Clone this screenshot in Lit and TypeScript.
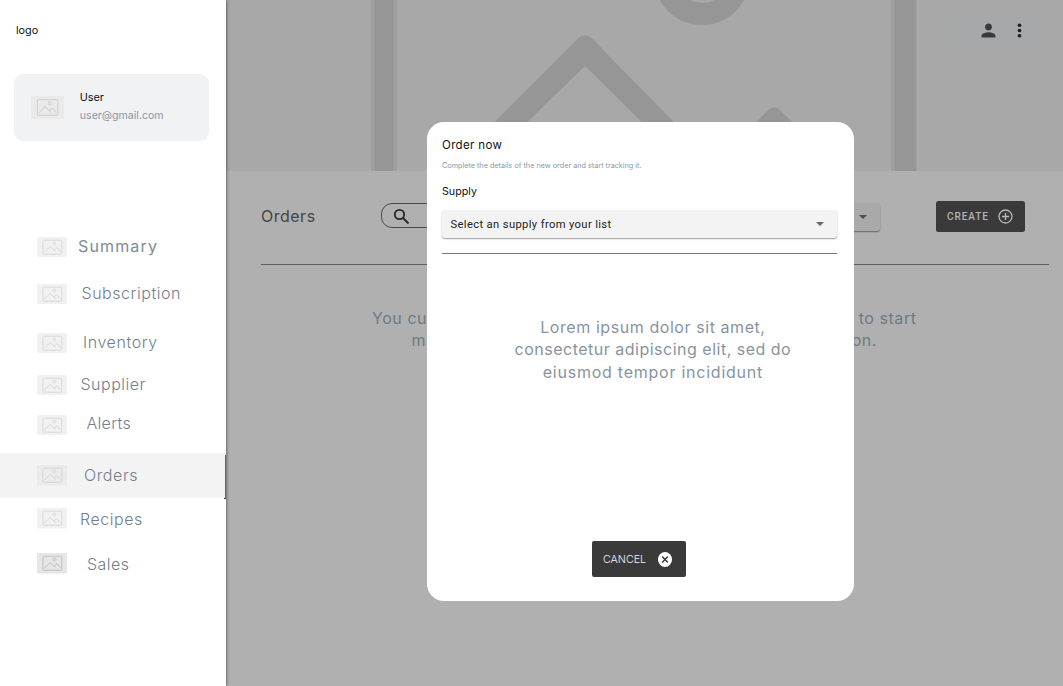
import { LitElement, html, css } from "lit";
import { customElement } from "lit/decorators.js";

interface NavItem {
  label: string;
  top: number; // space above the row
  indent: number; // space between the thumbnail and the label
  tracking: number;
  lift: number; // extra space under the label, raising it in the row
  kind?: string;
}

const NAV: NavItem[] = [
  { label: "Summary", top: 0, indent: 11, tracking: 1.15, lift: 3, kind: "strong" },
  { label: "Subscription", top: 17, indent: 14.5, tracking: 0.54, lift: 3 },
  { label: "Inventory", top: 19, indent: 16, tracking: 0.56, lift: 3 },
  { label: "Supplier", top: 12, indent: 13.5, tracking: 0.5, lift: 3 },
  { label: "Alerts", top: 10, indent: 19.5, tracking: 0.3, lift: 5 },
  { label: "Orders", top: 13, indent: 17, tracking: 0.6, lift: 2, kind: "active" },
  { label: "Recipes", top: 5.5, indent: 13, tracking: 0.54, lift: 0 },
  { label: "Sales", top: 15, indent: 20, tracking: 0.45, lift: 0, kind: "dark" },
];

@customElement("image-thumb")
export class ImageThumb extends LitElement {
  static styles = css`
    :host { display: block; flex: none; }
    svg { display: block; width: 100%; height: 100%; }
  `;
  render() {
    return html`<svg viewBox="0 0 31 21" preserveAspectRatio="none">
      <rect width="31" height="21" rx="0.8" fill="var(--thumb-bg, #f1f1f1)" />
      <g fill="none" stroke="var(--thumb-line, #d8d8d8)" stroke-width="1">
        <rect x="6" y="3.3" width="19.2" height="14.4" rx="1.2" />
        <circle cx="17.6" cy="6.7" r="1.4" />
        <path d="M7.3 15.8 13.3 9.7 19 15.2M17.3 13.4 20.2 11 24 15.2" />
      </g>
    </svg>`;
  }
}

@customElement("side-nav")
export class SideNav extends LitElement {
  static styles = css`
    :host {
      display: flex; flex-direction: column; box-sizing: border-box;
      width: 226px; height: 100%; background: #fff;
      font-family: Inter, sans-serif; color: #111;
    }
    .logo { padding: 23px 0 0 16px; font-size: 10.8px; line-height: 15px; }
    .user {
      display: flex; align-items: center; box-sizing: border-box;
      width: 195.5px; height: 66.5px; margin: 36px 0 0 13.8px; padding-left: 17px;
      border-radius: 9px; background: #f0f2f4;
    }
    .user image-thumb {
      width: 33px; height: 23px; margin-right: 16px;
      --thumb-bg: #eaeaea; --thumb-line: #d2d2d2;
    }
    .who { font-size: 10.8px; line-height: 18px; margin-top: -1px; }
    .mail { font-size: 10.6px; color: #8797a4; }
    nav { margin-top: 91.5px; }
    .item { display: flex; align-items: center; height: 30px; padding-left: 36.5px; }
    .item image-thumb { width: 30.5px; height: 20.5px; }
    .label { font-size: 16px; line-height: 20px; font-weight: 300; color: #72808e; }
    .strong .label { font-weight: 400; color: #7d8a97; }
    .active {
      height: 45px; background: #f3f3f3; position: relative;
      --thumb-bg: #ebebeb; --thumb-line: #d6d6d6;
    }
    .active::after {
      content: ""; position: absolute; right: 0; top: 2px; bottom: -1px;
      width: 2px; box-sizing: border-box; border-right: 1px solid #666; border-bottom: 1px solid #333;
    }
    .dark { --thumb-bg: #e6e6e6; --thumb-line: #c0c0c0; }
  `;
  render() {
    return html`
      <div class="logo">logo</div>
      <div class="user">
        <image-thumb></image-thumb>
        <div class="who"><div>User</div><div class="mail">user@gmail.com</div></div>
      </div>
      <nav>
        ${NAV.map(
          (n) => html`<div class="item ${n.kind ?? ""}" style="margin-top:${n.top}px">
            <image-thumb></image-thumb>
            <span class="label" style="margin-left:${n.indent}px;letter-spacing:${n.tracking}px;padding-bottom:${n.lift}px">${n.label}</span>
          </div>`
        )}
      </nav>
    `;
  }
}

@customElement("orders-page")
export class OrdersPage extends LitElement {
  static styles = css`
    :host {
      display: flex; flex-direction: column; height: 100%; flex: 1;
      background: #b0b0b0; font-family: Inter, sans-serif;
      border-right: 1px solid #ececec; box-sizing: border-box;
    }
    .hero { display: grid; height: 170.5px; background: #a8a8a8; overflow: hidden; flex: none; }
    .hero > * { grid-area: 1 / 1; }
    .hero svg { display: block; }
    .pill {
      justify-self: end; display: flex; align-items: center; box-sizing: border-box;
      width: 98px; height: 36px; margin: 14px 16px 0 0; padding: 0 0 3px 28.5px;
      border-radius: 18px; background: #a6a8aa; gap: 10px;
    }
    .bar { display: flex; align-items: center; height: 32px; margin: 29.5px 38px 0 35px; }
    h1 { margin: 0; width: 119.5px; flex: none; font-size: 16px; line-height: 20px; font-weight: 400; letter-spacing: 0.5px; color: #444; }
    .search {
      box-sizing: border-box; width: 220px; height: 25px; border: 1px solid #4a4a4a;
      border-radius: 11px; padding: 3.5px 0 0 11px; margin-top: -1px; flex: none;
    }
    .search svg, .pill svg, .create svg { display: block; }
    .filter {
      display: flex; align-items: center; justify-content: flex-end; box-sizing: border-box; flex: none;
      width: 200px; height: 28px; margin: 1px 0 0 79.5px; padding-right: 13px;
      border-radius: 3px; background: #a9a9a9; box-shadow: 0 1px 1.5px rgba(0, 0, 0, .42);
    }
    .create {
      display: flex; align-items: center; box-sizing: border-box; flex: none;
      width: 89.5px; height: 31px; margin: 0 0 0 55.5px; padding-left: 11.5px;
      border-radius: 2.5px; background: #3a3a3a; color: #b3b3b3;
      font: 500 10px Roboto, sans-serif; letter-spacing: 0.95px; gap: 8.5px;
    }
    .rule { height: 1px; margin: 32px 14.5px 0 35px; background: #606060; flex: none; }
    .empty { margin: 41.5px 0 0 146px; width: 544.5px; font-size: 16px; line-height: 22.5px; font-weight: 400; color: #6e7a85; letter-spacing: 0.55px; }
    .line { display: flex; justify-content: space-between; }
    .line.short { margin: 0 39.5px; }
  `;
  render() {
    return html`
      <div class="hero">
        <svg width="836" height="171" viewBox="226 0 836 171">
          <g fill="#9f9f9f">
            <rect x="371" width="26" height="171" />
            <rect x="891" width="26" height="171" />
          </g>
          <g fill="#969696">
            <rect x="374.5" width="19" height="171" />
            <rect x="894.5" width="21" height="171" />
            <path d="M447 170 579 37.5Q585 33.5 591 37.5L721 170H690L585 66 478 170Z" />
            <path d="M710 170 768.5 109.5Q774 105 779.5 109.5L840 170Z" />
          </g>
          <circle cx="702" cy="-23" r="37" fill="none" stroke="#969696" stroke-width="22" />
        </svg>
        <div class="pill">
          <svg width="21" height="21" viewBox="0 0 24 24" fill="#3a3a3a">
            <path d="M12 12c2.21 0 4-1.79 4-4s-1.79-4-4-4-4 1.79-4 4 1.79 4 4 4zm0 2c-2.67 0-8 1.34-8 4v2h16v-2c0-2.66-5.33-4-8-4z" />
          </svg>
          <svg width="21" height="21" viewBox="0 0 24 24" fill="#222">
            <circle cx="12" cy="6" r="2.1" /><circle cx="12" cy="12" r="2.1" /><circle cx="12" cy="18" r="2.1" />
          </svg>
        </div>
      </div>
      <div class="bar">
        <h1>Orders</h1>
        <div class="search">
          <svg width="17" height="17" viewBox="0 0 17 17" fill="none" stroke="#262626" stroke-width="1.8">
            <circle cx="6.5" cy="6.5" r="4.7" /><path d="M10 10 15.5 15.5" />
          </svg>
        </div>
        <div class="filter">
          <svg width="8" height="4" viewBox="0 0 8 4" fill="#4d4d4d"><path d="M0 0h8L4 4z" /></svg>
        </div>
        <div class="create">
          <span>CREATE</span>
          <svg width="17" height="17" viewBox="0 0 17 17" fill="none" stroke="#b8b8b8" stroke-width="1.3">
            <circle cx="8.5" cy="8.5" r="6.5" /><path d="M8.5 5v7M5 8.5h7" />
          </svg>
        </div>
      </div>
      <div class="rule"></div>
      <div class="empty">
        <div class="line"><span>You cu</span><span>to start</span></div>
        <div class="line short"><span>m</span><span>on.</span></div>
      </div>
    `;
  }
}

@customElement("order-dialog")
export class OrderDialog extends LitElement {
  static styles = css`
    :host {
      display: flex; flex-direction: column; box-sizing: border-box;
      width: 427px; height: 478.5px; padding: 15px 17.5px 0 14.7px;
      border-radius: 17px; background: #fff; font-family: Inter, sans-serif; color: #111;
    }
    h2 { margin: 0; font-size: 11.5px; line-height: 16px; font-weight: 400; letter-spacing: 0.35px; }
    .hint { margin-top: 7.5px; font-size: 7.25px; line-height: 10px; color: #8b99a6; }
    .field { margin-top: 13px; font-size: 10.7px; line-height: 16px; }
    .select {
      display: flex; align-items: center; justify-content: space-between; box-sizing: border-box;
      height: 28px; margin-top: 10.5px; padding: 0 13px 0 8.5px; border-radius: 3px;
      background: #f3f3f3; box-shadow: 0 1px 1.5px rgba(0, 0, 0, .4);
      font: 400 11.2px Roboto, sans-serif; letter-spacing: 0.37px; color: #222;
    }
    .rule { height: 1px; margin-top: 14.5px; background: #777; flex: none; }
    .body {
      margin: 62.3px 0 0 27px; text-align: center; white-space: nowrap;
      font-size: 16px; line-height: 22.5px; color: #8794a0; font-weight: 400;
    }
    .a { letter-spacing: 0.57px; }
    .b { letter-spacing: 0.5px; }
    .c { letter-spacing: 0.76px; }
    .cancel {
      display: flex; align-items: center; box-sizing: border-box; flex: none;
      width: 94px; height: 36px; margin: 158.2px 0 0 150px; padding-left: 11px; gap: 12px;
      border-radius: 2px; background: #3a3a3a; color: #f4f4f4; font-size: 10.7px; font-weight: 300;
    }
    svg { display: block; }
  `;
  render() {
    return html`
      <h2>Order now</h2>
      <div class="hint">Complete the details of the new order and start tracking it.</div>
      <div class="field">Supply</div>
      <div class="select">
        <span>Select an supply from your list</span>
        <svg width="8" height="4" viewBox="0 0 8 4" fill="#666"><path d="M0 0h8L4 4z" /></svg>
      </div>
      <div class="rule"></div>
      <div class="body">
        <div class="a">Lorem ipsum dolor sit amet,</div>
        <div class="b">consectetur adipiscing elit, sed do</div>
        <div class="c">eiusmod tempor incididunt</div>
      </div>
      <div class="cancel">
        <span>CANCEL</span>
        <svg width="14" height="15" viewBox="0 0 14 15">
          <ellipse cx="7" cy="7.5" rx="7" ry="7.4" fill="#fff" />
          <path d="M4.2 4.5 9.8 10.5M9.8 4.5 4.2 10.5" stroke="#3a3a3a" stroke-width="1.5" />
        </svg>
      </div>
    `;
  }
}

@customElement("app-root")
export class AppRoot extends LitElement {
  static styles = css`
    :host { display: flex; position: relative; width: 1063px; height: 686px; overflow: hidden; background: #fff; }
    side-nav { flex: none; position: relative; z-index: 1; box-shadow: 1px 0 2.5px rgba(0, 0, 0, .4); }
    order-dialog { position: absolute; left: 427.3px; top: 122px; z-index: 2; }
  `;
  render() {
    return html`<side-nav></side-nav><orders-page></orders-page><order-dialog></order-dialog>`;
  }
}
